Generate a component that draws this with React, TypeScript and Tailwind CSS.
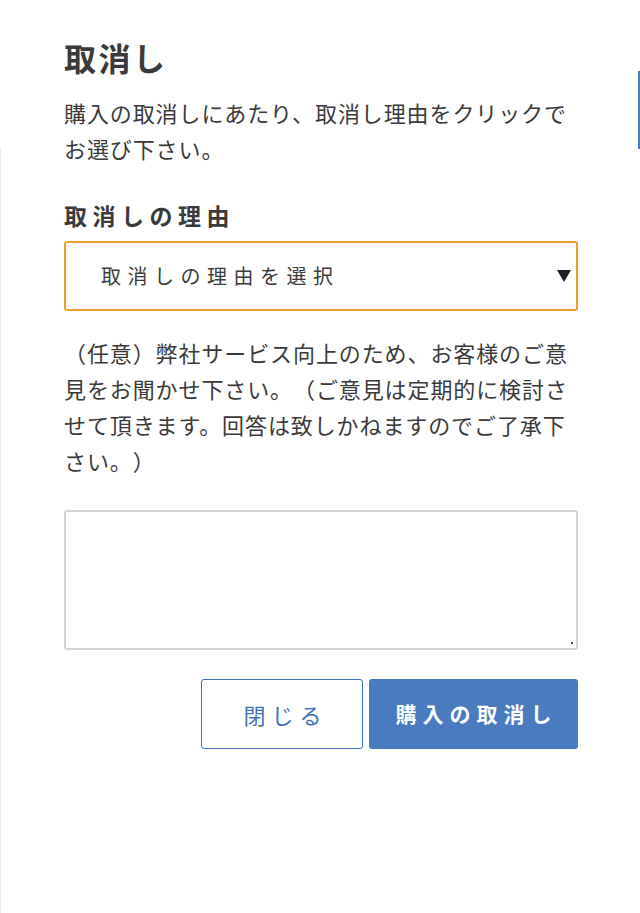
import React from "react";

const font = { fontFamily: '"Noto Sans CJK JP", "Noto Sans", sans-serif' };

export default function App() {
  return (
    <div className="relative min-h-[913px] w-[640px] bg-white text-[#3a3a3a] [text-spacing-trim:space-all]" style={font}>
      <div className="absolute right-0 top-[71px] h-[78px] w-[2px] bg-[#4a7bbf]" />
      <div className="absolute left-0 top-[148px] bottom-0 w-px bg-[#ececec]" />
      <div className="flex flex-col px-16 pt-[38px]">
        <h1 className="text-[32px] font-bold leading-[38px] tracking-[2.5px]">取消し</h1>
        <p className="mt-[18px] text-[22px] leading-[36px] tracking-[0.9px]">
          購入の取消しにあたり、取消し理由をクリックでお選び下さい。
        </p>
        <h2 className="mt-[34px] text-[23px] font-bold leading-[30px] tracking-[5.5px]">取消しの理由</h2>
        <div className="mt-[11px] flex h-[70px] w-[514px] items-center justify-between rounded-[3px] border-2 border-[#e9a027] pl-[35px] pr-[5px]">
          <span className="text-[20px] tracking-[6.5px] text-[#3c3c3c]">取消しの理由を選択</span>
          <svg width="14" height="12" viewBox="0 0 14 12">
            <polygon points="0,0 14,0 7,12" fill="#222" />
          </svg>
        </div>
        <p className="mt-[23px] w-[514px] text-[22px] leading-[36px] tracking-[0.9px]">
          （任意）弊社サービス向上のため、お客様のご意見をお聞かせ下さい。（ご意見は定期的に検討させて頂きます。回答は致しかねますのでご了承下さい。）
        </p>
        <div className="relative mt-[32px] h-[140px] w-[514px]">
          <textarea className="h-full w-full resize-none rounded-[3px] border-2 border-[#d4d4d4] outline-none" />
          <div className="absolute bottom-[6px] right-[5px] h-[2px] w-[2px] bg-[#555]" />
        </div>
        <div className="mt-[29px] flex w-[514px] justify-end gap-[6px]">
          <button className="flex h-[70px] w-[162px] items-center justify-center rounded-[3px] border-[1.5px] border-[#3e72ba] bg-white pl-[7px] text-[22px] tracking-[6px] text-[#3e72ba]">
            閉じる
          </button>
          <button className="flex h-[70px] w-[209px] items-center justify-center rounded-[3px] bg-[#4a7bbf] pl-[6px] text-[21px] font-bold tracking-[6px] text-white">
            購入の取消し
          </button>
        </div>
      </div>
    </div>
  );
}
